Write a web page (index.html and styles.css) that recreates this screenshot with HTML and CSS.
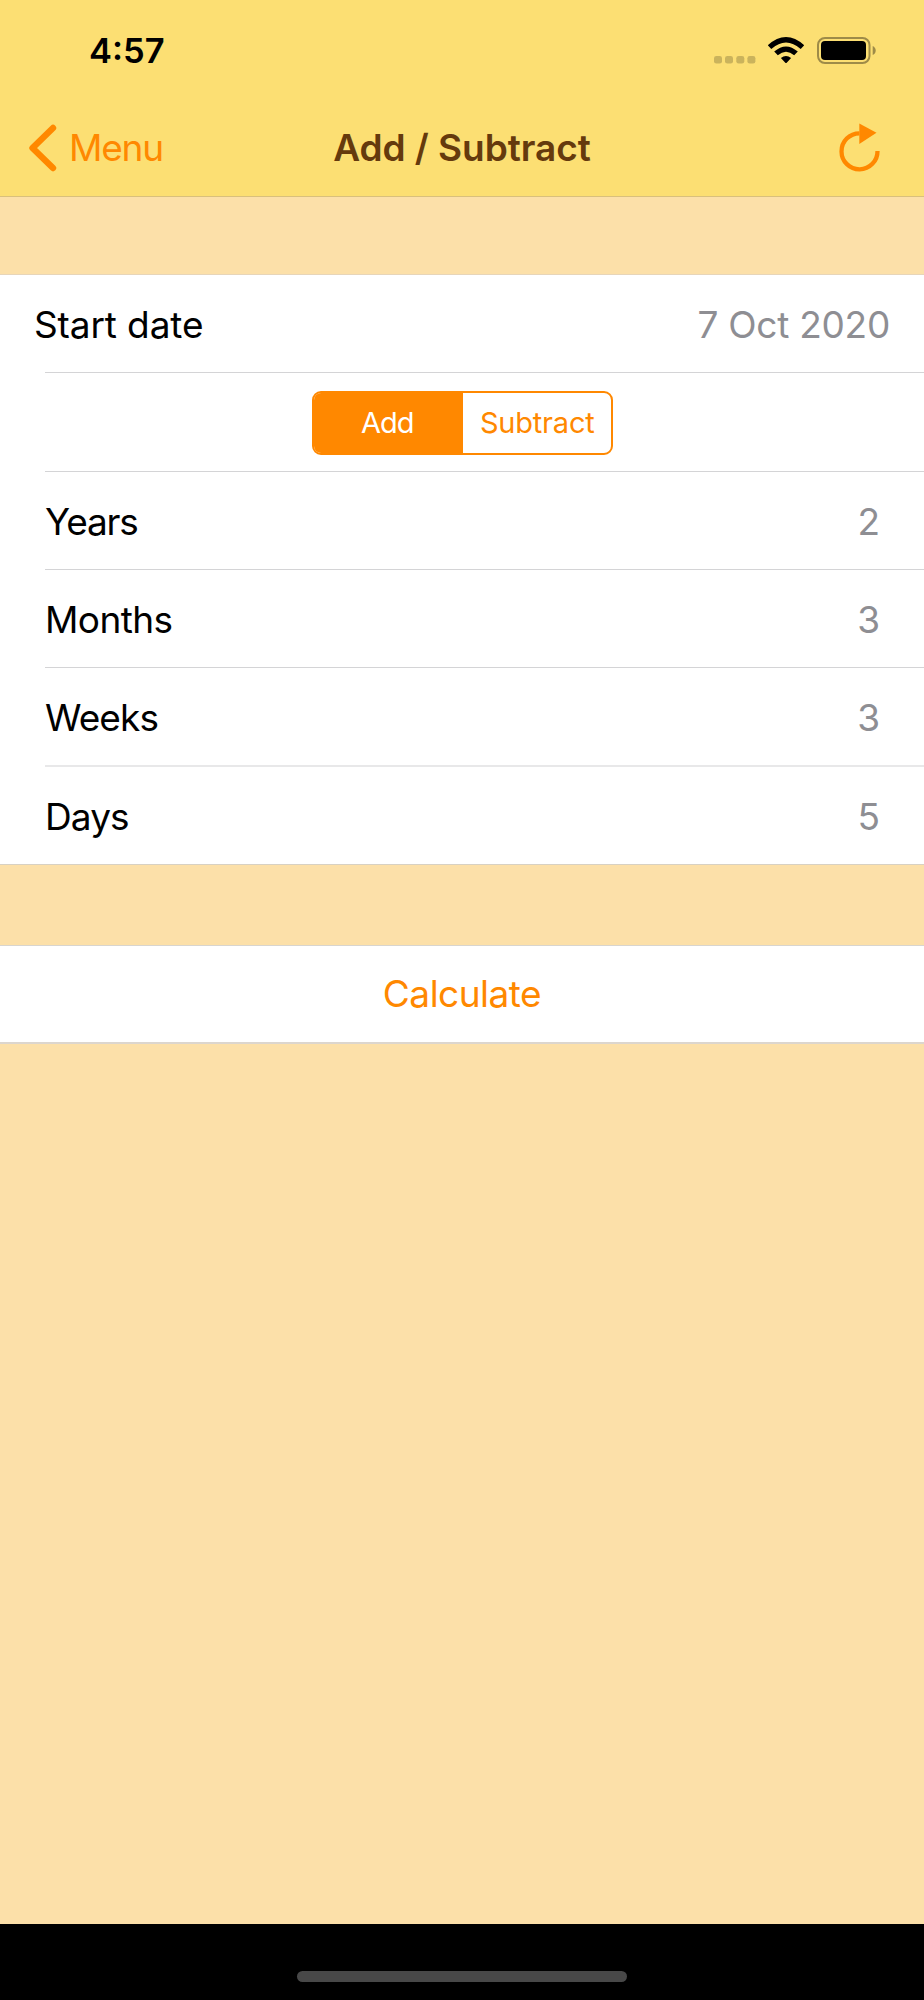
FILE: index.html
```html
<!DOCTYPE html>
<html lang="en">
<head>
<meta charset="utf-8">
<title>Add / Subtract</title>
<link rel="stylesheet" href="styles.css">
</head>
<body>
<div class="screen">
  <header class="header">
    <div class="status">
      <span class="time">4:57</span>
      <svg class="indicators" width="164" height="28" viewBox="0 0 164 28">
        <g fill="#cab35c">
          <rect x="0" y="19" width="8" height="7.5" rx="2.3"/>
          <rect x="11" y="19" width="8" height="7.5" rx="2.3"/>
          <rect x="22.300" y="19" width="8" height="7.5" rx="2.3"/>
          <rect x="33.400" y="19" width="8" height="7.5" rx="2.3"/>
        </g>
        <path d="M53.800 8.300 Q72 -8.100 90.200 8.300 L86.700 12 Q72 -1 57.300 12 Z M60.200 14.600 Q72 4.200 83.800 14.600 L80.200 18.200 Q72 11.200 63.800 18.200 Z M66.900 21 Q72 17.200 77.100 21 L72.700 25.800 Q72 26.400 71.300 25.800 Z" fill="#000"/>
        <rect x="104" y="1" width="51.500" height="25" rx="7" fill="none" stroke="#9e8b48" stroke-width="2"/>
        <rect x="107" y="4" width="45" height="19" rx="4" fill="#000"/>
        <path d="M158.700 9 Q161.700 10.500 161.700 13.500 Q161.700 16.500 158.700 18 Z" fill="#9e8b48"/>
      </svg>
    </div>
    <nav class="nav">
      <a class="back">
        <svg width="30" height="50" viewBox="0 0 30 50"><path d="M25 5 L4.500 25 L25 45" fill="none" stroke="#ff8800" stroke-width="6.400" stroke-linecap="round" stroke-linejoin="round"/></svg>
        <span class="back-label">Menu</span>
      </a>
      <h1 class="title">Add / Subtract</h1>
      <svg class="reload" width="42" height="50" viewBox="0 0 42 50"><path d="M20.500 10.300 A18 18 0 1 0 38.500 28" fill="none" stroke="#ff8800" stroke-width="4.300"/><path d="M20.300 0.500 L37.500 9.700 L20.300 21 Z" fill="#ff8800"/></svg>
    </nav>
  </header>

  <main class="content">
    <section class="group">
      <div class="row row-date"><span class="label start">Start date</span><span class="value date">7 Oct 2020</span></div>
      <div class="row row-mode">
        <div class="segmented">
          <span class="segment selected"><span class="add">Add</span></span>
          <span class="segment"><span class="subtract">Subtract</span></span>
        </div>
      </div>
      <div class="row"><span class="label years">Years</span><span class="value">2</span></div>
      <div class="row"><span class="label months">Months</span><span class="value">3</span></div>
      <div class="row row-weeks"><span class="label weeks">Weeks</span><span class="value">3</span></div>
      <div class="row row-days"><span class="label days">Days</span><span class="value">5</span></div>
    </section>
    <section class="group action"><span class="calculate">Calculate</span></section>
  </main>
  <footer class="home"><div class="home-bar"></div></footer>
</div>
</body>
</html>
```

FILE: styles.css
```css
* { box-sizing: border-box; }
body { margin: 0; font-family: Inter, "Liberation Sans", sans-serif; font-size: 37px; line-height: 44px; color: #000; }
.screen { width: 924px; height: 2000px; display: flex; flex-direction: column; background: #fce0a9; }
.header { height: 197px; background: #fcdf73; border-bottom: 1px solid #d9c07c; }
.status { height: 100px; padding: 37px 46px 0 89px; display: flex; justify-content: space-between; align-items: flex-start; }
.time { font-size: 34.5px; line-height: 28px; font-weight: 600; }
.nav { height: 96px; padding: 0 28px; display: grid; grid-template-columns: 1fr auto 1fr; align-items: center; }
.back { display: flex; align-items: center; gap: 11px; color: #ff8800; }
.back-label { letter-spacing: -1.2px; }
.title { margin: 0; font-size: 37px; line-height: 44px; font-weight: 600; color: #653a0d; letter-spacing: -0.05px; }
.reload { justify-self: end; margin-right: 15px; }
.content { flex: 1; padding-top: 77px; }
.group { background: #fff; border-top: 1px solid #e7d5b9; border-bottom: 1px solid #d8d1c3; }
.row { height: 98px; margin-left: 45px; padding: 2px 44px 0 0; display: flex; align-items: center; justify-content: space-between; border-bottom: 1px solid #d4d4d6; }
.row-date { padding-right: 34px; }
.row-date .label { margin-left: -11px; }
.row-mode { height: 99px; padding: 2px 0 0; justify-content: flex-start; }
.row-weeks { height: 99px; border-bottom: 2px solid #e8e8e9; }
.row-days { height: 97px; border-bottom: 0; }
.start { letter-spacing: -0.12px; }
.years { letter-spacing: -1.15px; }
.months { letter-spacing: -0.6px; }
.weeks { letter-spacing: -0.9px; }
.days { letter-spacing: -0.9px; }
.value { color: #8e8e93; }
.date { letter-spacing: -0.25px; }
.segmented { margin-left: 267px; width: 301px; height: 64px; display: grid; grid-template-columns: 1fr 1fr; border: 2px solid #ff8800; border-radius: 9px; overflow: hidden; font-size: 29px; }
.segment { display: flex; align-items: center; justify-content: center; color: #ff8800; }
.selected { background: #ff8800; color: #fff; }
.add { letter-spacing: -1px; margin-right: 2px; }
.subtract { letter-spacing: -0.2px; margin-left: 1px; }
.action { margin-top: 80px; height: 99px; display: flex; align-items: center; justify-content: center; color: #ff8800; border-top-color: #d8d5cf; border-bottom: 2px solid #dcd6ce; }
.calculate { letter-spacing: -0.5px; }
.home { height: 76px; background: #000; padding-top: 47px; }
.home-bar { width: 330px; height: 11px; margin: 0 auto; border-radius: 6px; background: #484848; }
```
